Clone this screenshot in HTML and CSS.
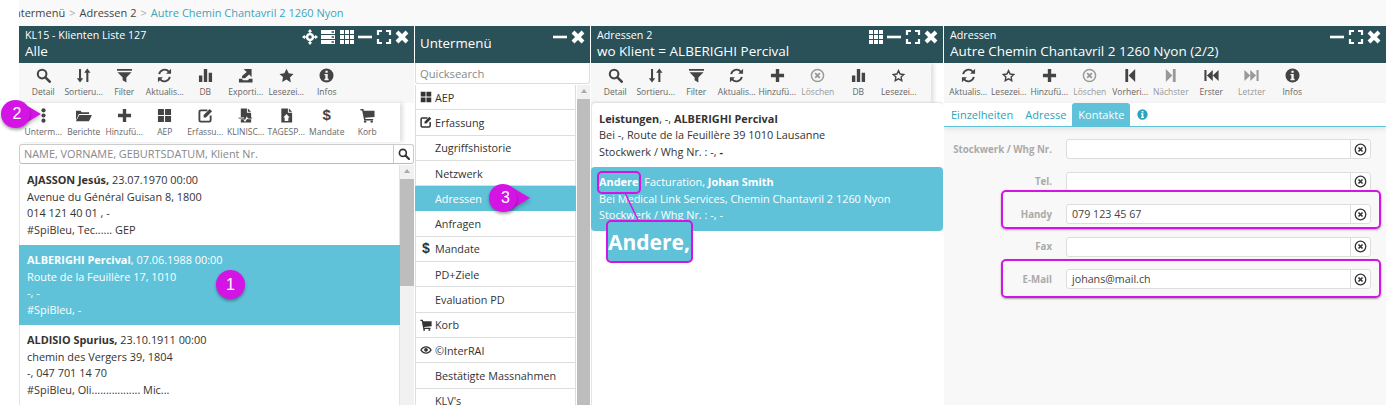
FILE: index.html
```html
<!DOCTYPE html>
<html lang="en">
<head>
    <meta charset="UTF-8">
    <meta name="viewport" content="width=device-width, initial-scale=1.0">
    <title>KL15 - Klienten Liste</title>
    <link rel="stylesheet" href="styles.css">
</head>
<body>
    <!-- Icon sheet -->
    <svg class="icon-sheet" xmlns="http://www.w3.org/2000/svg">
        <symbol id="i-search" viewBox="0 0 16 16"><circle cx="6.500" cy="6.500" r="4.600" fill="none" stroke="currentColor" stroke-width="2.200"/><path d="M10 10l4.600 4.600" stroke="currentColor" stroke-width="2.800" stroke-linecap="round"/></symbol>
        <symbol id="i-sort" viewBox="0 0 16 16"><path d="M3.200 1h2.200v10h2.300l-3.400 4.500L.9 11h2.300zM11 15h2.200V5h2.300L12 .5 8.700 5H11z" fill="currentColor"/></symbol>
        <symbol id="i-filter" viewBox="0 0 16 16"><path d="M0 1h16v2H0zM.5 4.500h15L10 10v5.500L6 13v-3z" fill="currentColor"/></symbol>
        <symbol id="i-refresh" viewBox="0 0 16 16"><path d="M2.300 6.500A6 6 0 0 1 12.600 3.800M13.700 9.500A6 6 0 0 1 3.400 12.200" fill="none" stroke="currentColor" stroke-width="2"/><path d="M15 .9v5.300H9.700zM1 15.100V9.800h5.300z" fill="currentColor"/></symbol>
        <symbol id="i-chart" viewBox="0 0 16 16"><path d="M1 8h3.600v7H1zM6.200 1h3.600v14H6.200zM11.400 5H15v10h-3.600z" fill="currentColor"/></symbol>
        <symbol id="i-export" viewBox="0 0 16 16"><path d="M1 11.500h3l1.500 1.500h5l1.500-1.500h3.500V15.500H1zM6 1h8.500v8.500l-2.700-2.700L7.500 11H4.300V8.500l5-4.300z" fill="currentColor"/></symbol>
        <symbol id="i-star" viewBox="0 0 16 16"><path d="M8 .8l2.300 4.900 5.200.7-3.800 3.700.9 5.300L8 12.300l-4.600 2.600.9-5.300L.5 6.400l5.200-.7z" fill="currentColor"/></symbol>
        <symbol id="i-star-o" viewBox="0 0 16 16"><path d="M8 2.800l1.700 3.600 3.900.5-2.800 2.700.7 3.900L8 11.600l-3.500 1.900.7-3.900-2.800-2.700 3.900-.5z" fill="none" stroke="currentColor" stroke-width="1.500"/></symbol>
        <symbol id="i-info" viewBox="0 0 16 16"><path fill-rule="evenodd" d="M8 .5a7.500 7.500 0 1 0 0 15 7.500 7.500 0 0 0 0-15zM6.800 2.800h2.500v2.300H6.800zM5.800 6.300h3.500v5.200h1V13H5.800v-1.500h1V7.800h-1z" fill="currentColor"/></symbol>
        <symbol id="i-dots" viewBox="0 0 16 16"><circle cx="8" cy="2.500" r="2.200" fill="currentColor"/><circle cx="8" cy="8" r="2.200" fill="currentColor"/><circle cx="8" cy="13.500" r="2.200" fill="currentColor"/></symbol>
        <symbol id="i-folder" viewBox="0 0 18 16"><path d="M1 3h5l1 1.500h8v2H4L1 13zM4.600 7.500H18L14.800 14H.9z" fill="currentColor"/></symbol>
        <symbol id="i-plus" viewBox="0 0 16 16"><path d="M6.200 1h3.600v5.200H15v3.600H9.800V15H6.200V9.800H1V6.200h5.200z" fill="currentColor"/></symbol>
        <symbol id="i-large" viewBox="0 0 16 16"><path d="M1 1h6.400v6.400H1zM8.600 1H15v6.400H8.600zM1 8.600h6.400V15H1zM8.600 8.600H15V15H8.600z" fill="currentColor"/></symbol>
        <symbol id="i-edit" viewBox="0 0 16 16"><path d="M10 2.500H3A1.500 1.500 0 0 0 1.500 4v9A1.500 1.500 0 0 0 3 14.500h9a1.500 1.500 0 0 0 1.500-1.500V8" fill="none" stroke="currentColor" stroke-width="2"/><path d="M6 7.500L12.500 1 15 3.500 8.500 10H6z" fill="currentColor"/></symbol>
        <symbol id="i-pulse" viewBox="0 0 16 16"><path d="M3 .5h6.500v4.500H14v5.800h-3L9.500 8.500 7.500 12.500 6 9.800H3zM10.500.5L14 4h-3.500zM3 12h2.400l2.100 2.800 2.300-3.300.5.500H14v3.500H3z" fill="currentColor"/><path d="M.5 10.800h5l1 1.700 2.500-4.500 2 2.800h4" fill="none" stroke="currentColor" stroke-width=".9"/></symbol>
        <symbol id="i-home" viewBox="0 0 16 16"><path fill-rule="evenodd" d="M2.500.5h7v4.500h4.500v10.500H2.500zM8 6.500L4.500 10H6v3.800h4V10h1.500zM10.500.5L14 4h-3.500z" fill="currentColor"/></symbol>
        <symbol id="i-cart" viewBox="0 0 16 16"><path d="M.5 1h3l.7 2H15.500v6.500L5.500 10.500l.3 1.200H14V13.300H4.400L2.300 2.600H.5z" fill="currentColor"/><circle cx="5.500" cy="14.500" r="1.300" fill="currentColor"/><circle cx="12.500" cy="14.500" r="1.300" fill="currentColor"/></symbol>
        <symbol id="i-eye" viewBox="0 0 16 16"><path fill-rule="evenodd" d="M8 3C4.500 3 1.800 5.200.3 8c1.500 2.800 4.200 5 7.700 5s6.200-2.200 7.700-5C14.200 5.200 11.500 3 8 3zM8 4.800c2.400 0 4.400 1.200 5.600 3.200-1.200 2-3.200 3.200-5.600 3.200S3.600 10 2.400 8C3.600 6 5.600 4.800 8 4.800z" fill="currentColor"/><circle cx="8" cy="7.800" r="2.500" fill="currentColor"/></symbol>
        <symbol id="i-clear" viewBox="0 0 16 16"><circle cx="8" cy="8" r="6.500" fill="none" stroke="currentColor" stroke-width="1.600"/><path d="M5.500 5.500l5 5M10.500 5.500l-5 5" stroke="currentColor" stroke-width="2"/></symbol>
        <symbol id="i-prev" viewBox="0 0 16 16"><path d="M2.500 1h3v14h-3zM6 8l7-7v14z" fill="currentColor"/></symbol>
        <symbol id="i-next" viewBox="0 0 16 16"><path d="M10.500 1h3v14h-3zM10 8L3 1v14z" fill="currentColor"/></symbol>
        <symbol id="i-first" viewBox="0 0 18 16"><path d="M.5 1.500h2.500v13H.5zM3.500 8l7-6.500v13zM10.500 8l7-6.500v13z" fill="currentColor"/></symbol>
        <symbol id="i-last" viewBox="0 0 18 16"><path d="M15 1.500h2.500v13H15zM14.500 8l-7-6.500v13zM7.500 8l-7-6.500v13z" fill="currentColor"/></symbol>
        <symbol id="i-move" viewBox="0 0 16 16"><path d="M8 0l2.300 2.800H8.700v1a4.300 4.300 0 0 1 3.500 3.500h1V5.700L16 8l-2.800 2.300V8.700h-1a4.300 4.300 0 0 1-3.500 3.500v1h1.600L8 16l-2.300-2.800h1.600v-1a4.300 4.300 0 0 1-3.500-3.500h-1v1.600L0 8l2.800-2.300v1.600h1a4.300 4.300 0 0 1 3.500-3.500v-1H5.700z" fill="currentColor"/><circle cx="8" cy="8" r="1.700" fill="#2a5058"/></symbol>
        <symbol id="i-server" viewBox="0 0 16 16"><path fill-rule="evenodd" d="M1 1h14v4H1zM11.500 2.300v1.400H14V2.300zM1 6h14v4H1zM11.500 7.300v1.400H14V7.300zM1 11h14v4H1zM11.500 12.300v1.400H14v-1.400z" fill="currentColor"/></symbol>
        <symbol id="i-grid" viewBox="0 0 16 16"><path d="M1 1h4v4H1zM6 1h4v4H6zM11 1h4v4h-4zM1 6h4v4H1zM6 6h4v4H6zM11 6h4v4h-4zM1 11h4v4H1zM6 11h4v4H6zM11 11h4v4h-4z" fill="currentColor"/></symbol>
        <symbol id="i-min" viewBox="0 0 16 16"><path d="M1 6.700h14v2.600H1z" fill="currentColor"/></symbol>
        <symbol id="i-full" viewBox="0 0 16 16"><path d="M2 6V2h4M10 2h4v4M14 10v4h-4M6 14H2v-4" fill="none" stroke="currentColor" stroke-width="2.200"/></symbol>
        <symbol id="i-close" viewBox="0 0 16 16"><path d="M3 3l10 10M13 3L3 13" stroke="currentColor" stroke-width="4"/></symbol>
    </svg>

    <div class="breadcrumb">
        <div class="breadcrumb-inner">
            <span>Untermenü</span><span class="sep">&gt;</span><span>Adressen 2</span><span class="sep">&gt;</span><span class="current">Autre Chemin Chantavril 2 1260 Nyon</span>
        </div>
    </div>

    <div class="panels">
        <!-- Klienten Liste -->
        <section class="panel panel-clients">
            <header class="panel-head">
                <div class="head-titles">
                    <div class="head-small">KL15 - Klienten Liste 127</div>
                    <div class="head-big">Alle</div>
                </div>
                <div class="head-icons">
                    <svg><use href="#i-move"/></svg><svg><use href="#i-server"/></svg><svg><use href="#i-grid"/></svg><svg><use href="#i-min"/></svg><svg><use href="#i-full"/></svg><svg><use href="#i-close"/></svg>
                </div>
            </header>
            <div class="toolbar">
                <div class="tool"><svg><use href="#i-search"/></svg><span>Detail</span></div>
                <div class="tool"><svg><use href="#i-sort"/></svg><span>Sortieru...</span></div>
                <div class="tool"><svg><use href="#i-filter"/></svg><span>Filter</span></div>
                <div class="tool"><svg><use href="#i-refresh"/></svg><span>Aktualis...</span></div>
                <div class="tool"><svg><use href="#i-chart"/></svg><span>DB</span></div>
                <div class="tool"><svg><use href="#i-export"/></svg><span>Exporti...</span></div>
                <div class="tool"><svg><use href="#i-star"/></svg><span>Lesezei...</span></div>
                <div class="tool"><svg><use href="#i-info"/></svg><span>Infos</span></div>
            </div>
            <div class="toolbar toolbar-white">
                <div class="tool"><svg><use href="#i-dots"/></svg><span>Unterm...</span></div>
                <div class="tool"><svg class="icon-wide"><use href="#i-folder"/></svg><span>Berichte</span></div>
                <div class="tool"><svg><use href="#i-plus"/></svg><span>Hinzufü...</span></div>
                <div class="tool"><svg><use href="#i-large"/></svg><span>AEP</span></div>
                <div class="tool"><svg><use href="#i-edit"/></svg><span>Erfassu...</span></div>
                <div class="tool"><svg><use href="#i-pulse"/></svg><span>KLINISC...</span></div>
                <div class="tool"><svg><use href="#i-home"/></svg><span>TAGESP...</span></div>
                <div class="tool"><b class="dollar">$</b><span>Mandate</span></div>
                <div class="tool"><svg><use href="#i-cart"/></svg><span>Korb</span></div>
            </div>
            <div class="searchbar">
                <div class="searchbar-text">NAME, VORNAME, GEBURTSDATUM, Klient Nr.</div>
                <div class="searchbar-btn"><svg><use href="#i-search"/></svg></div>
            </div>
            <div class="scroll-wrap">
                <div class="client-list">
                    <div class="client">
                        <div><b>AJASSON Jesús,</b> 23.07.1970 00:00</div>
                        <div>Avenue du Général Guisan 8, 1800</div>
                        <div>014 121 40 01 , -</div>
                        <div>#SpiBleu, Tec...... GEP</div>
                    </div>
                    <div class="client selected">
                        <div><b>ALBERIGHI Percival</b>, 07.06.1988 00:00</div>
                        <div>Route de la Feuillère 17, 1010</div>
                        <div>-, -</div>
                        <div>#SpiBleu, -</div>
                    </div>
                    <div class="client">
                        <div><b>ALDISIO Spurius,</b> 23.10.1911 00:00</div>
                        <div>chemin des Vergers 39, 1804</div>
                        <div>-, 047 701 14 70</div>
                        <div>#SpiBleu, Oli................. Mic...</div>
                    </div>
                </div>
                <div class="scrollbar"><i class="scroll-up"></i><i class="scroll-thumb thumb-clients"></i></div>
            </div>
        </section>

        <!-- Untermenü -->
        <section class="panel panel-menu">
            <header class="panel-head">
                <div class="head-titles"><div class="head-menu">Untermenü</div></div>
                <div class="head-icons">
                    <svg><use href="#i-min"/></svg><svg><use href="#i-close"/></svg>
                </div>
            </header>
            <div class="quicksearch">Quicksearch</div>
            <div class="scroll-wrap">
                <ul class="menu-list">
                    <li><svg><use href="#i-large"/></svg>AEP</li>
                    <li><svg><use href="#i-edit"/></svg>Erfassung</li>
                    <li>Zugriffshistorie</li>
                    <li>Netzwerk</li>
                    <li class="selected">Adressen</li>
                    <li>Anfragen</li>
                    <li><b class="dollar">$</b>Mandate</li>
                    <li>PD+Ziele</li>
                    <li>Evaluation PD</li>
                    <li><svg><use href="#i-cart"/></svg>Korb</li>
                    <li><svg><use href="#i-eye"/></svg>©InterRAI</li>
                    <li>Bestätigte Massnahmen</li>
                    <li>KLV's</li>
                </ul>
                <div class="scrollbar scrollbar-gray"><i class="scroll-up"></i></div>
            </div>
        </section>

        <!-- Adressen 2 -->
        <section class="panel panel-addresses">
            <header class="panel-head">
                <div class="head-titles">
                    <div class="head-small">Adressen 2</div>
                    <div class="head-big">wo Klient = ALBERIGHI Percival</div>
                </div>
                <div class="head-icons">
                    <svg><use href="#i-grid"/></svg><svg><use href="#i-min"/></svg><svg><use href="#i-full"/></svg><svg><use href="#i-close"/></svg>
                </div>
            </header>
            <div class="toolbar toolbar-short">
                <div class="tool"><svg><use href="#i-search"/></svg><span>Detail</span></div>
                <div class="tool"><svg><use href="#i-sort"/></svg><span>Sortieru...</span></div>
                <div class="tool"><svg><use href="#i-filter"/></svg><span>Filter</span></div>
                <div class="tool"><svg><use href="#i-refresh"/></svg><span>Aktualis...</span></div>
                <div class="tool"><svg><use href="#i-plus"/></svg><span>Hinzufü...</span></div>
                <div class="tool disabled"><svg><use href="#i-clear"/></svg><span>Löschen</span></div>
                <div class="tool"><svg><use href="#i-chart"/></svg><span>DB</span></div>
                <div class="tool"><svg><use href="#i-star-o"/></svg><span>Lesezei...</span></div>
            </div>
            <div class="address-list">
                <div class="address">
                    <div><b>Leistungen</b>, -, <b>ALBERIGHI Percival</b></div>
                    <div>Bei -, Route de la Feuillère 39 1010 Lausanne</div>
                    <div>Stockwerk / Whg Nr. : -, <b>-</b></div>
                </div>
                <div class="address selected">
                    <div><b>Andere,</b> Facturation, <b>Johan Smith</b></div>
                    <div>Bei Medical Link Services, Chemin Chantavril 2 1260 Nyon</div>
                    <div>Stockwerk / Whg Nr. : -, -</div>
                </div>
            </div>
        </section>

        <!-- Adressen detail -->
        <section class="panel panel-detail">
            <header class="panel-head">
                <div class="head-titles">
                    <div class="head-small">Adressen</div>
                    <div class="head-big">Autre Chemin Chantavril 2 1260 Nyon (2/2)</div>
                </div>
                <div class="head-icons">
                    <svg><use href="#i-min"/></svg><svg><use href="#i-full"/></svg><svg><use href="#i-close"/></svg>
                </div>
            </header>
            <div class="toolbar">
                <div class="tool"><svg><use href="#i-refresh"/></svg><span>Aktualis...</span></div>
                <div class="tool"><svg><use href="#i-star-o"/></svg><span>Lesezei...</span></div>
                <div class="tool"><svg><use href="#i-plus"/></svg><span>Hinzufü...</span></div>
                <div class="tool disabled"><svg><use href="#i-clear"/></svg><span>Löschen</span></div>
                <div class="tool"><svg><use href="#i-prev"/></svg><span>Vorheri...</span></div>
                <div class="tool disabled"><svg><use href="#i-next"/></svg><span>Nächster</span></div>
                <div class="tool"><svg><use href="#i-first"/></svg><span>Erster</span></div>
                <div class="tool disabled"><svg><use href="#i-last"/></svg><span>Letzter</span></div>
                <div class="tool"><svg><use href="#i-info"/></svg><span>Infos</span></div>
            </div>
            <div class="tabs">
                <div class="tab">Einzelheiten</div>
                <div class="tab">Adresse</div>
                <div class="tab active">Kontakte</div>
                <svg class="tab-info"><use href="#i-info"/></svg>
            </div>
            <div class="form">
                <div class="form-row">
                    <label>Stockwerk / Whg Nr.</label>
                    <div class="field"><div class="field-value"></div><div class="field-clear"><svg><use href="#i-clear"/></svg></div></div>
                </div>
                <div class="form-row">
                    <label>Tel.</label>
                    <div class="field"><div class="field-value"></div><div class="field-clear"><svg><use href="#i-clear"/></svg></div></div>
                </div>
                <div class="form-row">
                    <label>Handy</label>
                    <div class="field"><div class="field-value">079 123 45 67</div><div class="field-clear"><svg><use href="#i-clear"/></svg></div></div>
                </div>
                <div class="form-row">
                    <label>Fax</label>
                    <div class="field"><div class="field-value"></div><div class="field-clear"><svg><use href="#i-clear"/></svg></div></div>
                </div>
                <div class="form-row">
                    <label>E-Mail</label>
                    <div class="field"><div class="field-value">johans@mail.ch</div><div class="field-clear"><svg><use href="#i-clear"/></svg></div></div>
                </div>
            </div>
        </section>
    </div>

    <!-- Annotations drawn over the screenshot -->
    <div class="badge badge-one">1</div>
    <div class="badge-tip tip-two"></div>
    <div class="badge badge-two">2</div>
    <div class="badge-tip tip-three"></div>
    <div class="badge badge-three">3</div>
    <div class="mark mark-andere"></div>
    <div class="mark mark-handy"></div>
    <div class="mark mark-email"></div>
    <svg class="mark-line"><path d="M2 0L15 27" stroke="#d414e4" stroke-width="1.500"/></svg>
    <div class="loupe">Andere,</div>
</body>
</html>
```

FILE: styles.css
```css
/* Reset some default styles */
* {
    margin: 0;
    padding: 0;
    box-sizing: border-box;
    font-family: "Open Sans", Arial, sans-serif;
}

body {
    width: 1386px;
    height: 405px;
    overflow: hidden;
    position: relative;
    background-color: #fff;
    color: #333;
    font-size: 11px;
}

.icon-sheet {
    display: none;
}

/* Breadcrumb */
.breadcrumb {
    height: 26px;
    margin-left: 19px;
    overflow: hidden;
    background-color: #f9f9f9;
}

.breadcrumb-inner {
    display: flex;
    margin-left: -13px;
    padding-top: 5px;
    font-size: 11px;
    line-height: 16px;
    white-space: nowrap;
    color: #444;
}

.breadcrumb .sep {
    margin: 0 4px;
    color: #aaa;
}

.breadcrumb .current {
    color: #3ba5bd;
}

/* Panels */
.panels {
    display: flex;
    height: 379px;
    padding-left: 19px;
}

.panel {
    flex: none;
    display: flex;
    flex-direction: column;
    overflow: hidden;
}

.panel-clients {
    width: 395px;
    margin-right: 1px;
}

.panel-menu {
    width: 175px;
    margin-right: 1px;
}

.panel-addresses {
    width: 352px;
    margin-right: 1px;
}

.panel-detail {
    width: 442px;
}

.panel-head {
    flex: none;
    height: 37px;
    display: flex;
    justify-content: space-between;
    padding: 1px 4px 0 6px;
    background-color: #2a5058;
    color: #fff;
}

.head-small {
    font-size: 10.700px;
    line-height: 16px;
}

.head-big {
    font-size: 13.500px;
    line-height: 17px;
}

.head-menu {
    margin-left: -1px;
    font-size: 13.300px;
    line-height: 33px;
}

.head-icons {
    display: flex;
    gap: 2.500px;
    padding-top: 2px;
}

.head-icons svg {
    width: 16px;
    height: 16px;
}

/* Toolbars */
.toolbar {
    flex: none;
    height: 40px;
    display: flex;
    padding: 4px 0 0 4px;
    background-color: #f7f7f7;
}

.toolbar-white {
    height: 39px;
    width: 381px;
    background-color: #fff;
    box-shadow: 3px 0 4px rgba(0, 0, 0, 0.12);
}

.toolbar-short {
    width: 340px;
    box-shadow: 3px 0 4px rgba(0, 0, 0, 0.12);
}

.tool {
    width: 40.500px;
    display: flex;
    flex-direction: column;
    align-items: center;
    color: #444;
}

.tool svg {
    width: 15px;
    height: 15px;
    margin-top: 1px;
    flex: none;
}

.tool svg.icon-wide {
    width: 17px;
}

.tool span {
    margin-top: 1px;
    font-size: 8.500px;
    line-height: 15px;
    white-space: nowrap;
    color: #666;
}

.tool.disabled svg {
    color: #999;
}

.tool.disabled span {
    color: #999;
}

.dollar {
    font-family: "Liberation Sans", Arial, sans-serif;
    font-size: 15px;
    line-height: 16px;
    color: #444;
}

/* Client search */
.searchbar {
    flex: none;
    height: 20px;
    display: flex;
    margin-top: 2px;
    border: 1px solid #ccc;
    border-bottom-color: #bbb;
    border-radius: 3px;
    background-color: #fff;
}

.searchbar-text {
    flex: 1;
    padding-left: 4px;
    font-size: 10.900px;
    line-height: 18px;
    color: #888;
}

.searchbar-btn {
    width: 20px;
    display: flex;
    align-items: center;
    justify-content: center;
    border-left: 1px solid #ccc;
    color: #333;
}

.searchbar-btn svg {
    width: 12px;
    height: 12px;
}

/* Lists with a scrollbar */
.scroll-wrap {
    flex: 1;
    min-height: 0;
    display: flex;
    margin-top: 1px;
}

.scrollbar {
    flex: none;
    width: 14px;
    background-color: #f1f1f1;
}

.scrollbar-gray {
    width: 13px;
    margin-left: 1px;
    background-color: #bdbdbd;
}

.scroll-up {
    display: block;
    height: 14px;
    background-color: #f1f1f1;
    position: relative;
}

.scroll-up::after {
    content: "";
    position: absolute;
    left: 4px;
    top: 4px;
    border-left: 3px solid transparent;
    border-right: 3px solid transparent;
    border-bottom: 4px solid #aaa;
}

.scroll-thumb {
    display: block;
    background-color: #bdbdbd;
}

.thumb-clients {
    height: 107px;
}

.client-list {
    width: 381px;
    background-color: #fff;
    border-left: 1px solid #e4e4e4;
    border-right: 1px solid #e4e4e4;
}

.client {
    height: 80px;
    padding: 7px 7px 0;
    font-size: 10.900px;
    line-height: 16.500px;
    white-space: nowrap;
    color: #333;
}

.client.selected {
    margin: 0 -1px;
    padding-left: 8px;
    background-color: #5fc2d9;
    color: #fff;
}

/* Untermenu */
.quicksearch {
    flex: none;
    height: 21px;
    padding-left: 4px;
    font-size: 11.200px;
    line-height: 21px;
    color: #888;
    background-color: #fff;
    border: 1px solid #ddd;
    border-top: none;
    border-radius: 0 0 3px 3px;
}

.menu-list {
    width: 161px;
    flex: none;
    list-style: none;
    background-color: #fff;
    border-left: 1px solid #ddd;
    border-right: 1px solid #ddd;
}

.menu-list li {
    height: 25.300px;
    display: flex;
    align-items: center;
    padding-left: 19px;
    position: relative;
    font-size: 10.800px;
    color: #333;
    border-bottom: 1px solid #ddd;
    white-space: nowrap;
}

.menu-list li svg,
.menu-list li .dollar {
    position: absolute;
    left: 4px;
    top: 6px;
    width: 12px;
    height: 12px;
    color: #333;
}

.menu-list li .dollar {
    top: 3px;
    left: 6px;
    font-size: 14px;
}

.menu-list li.selected {
    margin: 0 -1px;
    padding-left: 20px;
    background-color: #5fc2d9;
    color: #fff;
    border-bottom: none;
}

/* Address list */
.address-list {
    flex: 1;
    background-color: #fff;
    border-left: 1px solid #e4e4e4;
    border-radius: 4px 4px 0 0;
    box-shadow: 0 -1px 2px rgba(0, 0, 0, 0.12);
}

.address {
    height: 64px;
    padding: 7.500px 7px 0;
    font-size: 10.900px;
    line-height: 16.500px;
    white-space: nowrap;
    color: #333;
}

.address.selected {
    margin-left: -1px;
    padding-left: 8px;
    padding-top: 7px;
    border-radius: 4px;
    background-color: #5fc2d9;
    color: #fff;
}

/* Detail tabs */
.tabs {
    flex: none;
    height: 24px;
    display: flex;
    align-items: flex-end;
    padding-left: 1px;
    border-bottom: 1px solid #5fc2d9;
    background-color: #fff;
    box-shadow: 0 2px 5px rgba(0, 0, 0, 0.1);
    position: relative;
}

.tab {
    height: 23px;
    padding: 0 6px;
    font-size: 11px;
    line-height: 23px;
    color: #2aa3bd;
}

.tab.active {
    background-color: #5fc2d9;
    color: #fff;
    border-radius: 3px 3px 0 0;
}

.tab-info {
    width: 11px;
    height: 11px;
    margin: 0 0 6px 7px;
    color: #2aa3bd;
}

/* Detail form */
.form {
    flex: 1;
    display: flex;
    flex-direction: column;
    gap: 12.500px;
    padding: 12px 15px 0 0;
    background-color: #f8f8f8;
}

.form-row {
    display: flex;
    height: 20px;
    align-items: center;
}

.form-row label {
    width: 108px;
    margin-right: 14px;
    text-align: right;
    font-size: 9.700px;
    font-weight: 700;
    color: #aaa;
    white-space: nowrap;
}

.field {
    flex: 1;
    height: 20px;
    display: flex;
    background-color: #fff;
    border: 1px solid #ddd;
    border-radius: 3px;
}

.field-value {
    flex: 1;
    padding-left: 5px;
    font-size: 10.700px;
    line-height: 18px;
    color: #444;
}

.field-clear {
    width: 20px;
    display: flex;
    align-items: center;
    justify-content: center;
    border-left: 1px solid #ddd;
    color: #333;
}

.field-clear svg {
    width: 13px;
    height: 13px;
}

/* Annotations */
.badge {
    position: absolute;
    width: 29px;
    height: 29px;
    border-radius: 50%;
    background-color: #d414e4;
    color: #fff;
    font-family: "Liberation Sans", Arial, sans-serif;
    font-size: 16px;
    line-height: 29px;
    text-align: center;
    box-shadow: 0 2px 3px rgba(0, 0, 0, 0.35);
}

.badge-one {
    left: 216px;
    top: 270px;
}

.badge-two {
    left: 1px;
    top: 100px;
    height: 28px;
    line-height: 28px;
    text-indent: 3px;
}

.badge-three {
    left: 489px;
    top: 184px;
    width: 28px;
    height: 28px;
    line-height: 28px;
    text-indent: 5px;
}

.badge-tip {
    position: absolute;
    width: 0;
    height: 0;
    border-top: 13px solid transparent;
    border-bottom: 13px solid transparent;
    border-left: 22px solid #d414e4;
    filter: drop-shadow(0 2px 2px rgba(0, 0, 0, 0.3));
}

.tip-two {
    left: 19px;
    top: 101px;
}

.tip-three {
    left: 508px;
    top: 185px;
}

.mark {
    position: absolute;
    border: 2px solid #d414e4;
    border-radius: 5px;
}

.mark-andere {
    left: 597px;
    top: 171px;
    width: 44px;
    height: 23px;
}

.mark-handy {
    left: 1001px;
    top: 190px;
    width: 380px;
    height: 39px;
    box-shadow: 0 1px 2px rgba(0, 0, 0, 0.35);
}

.mark-email {
    left: 1001px;
    top: 259px;
    width: 380px;
    height: 39px;
    box-shadow: 0 1px 2px rgba(0, 0, 0, 0.35);
}

.mark-line {
    position: absolute;
    left: 623px;
    top: 193px;
    width: 18px;
    height: 27px;
}

.loupe {
    position: absolute;
    left: 606px;
    top: 220px;
    width: 87px;
    height: 43px;
    border: 2px solid #d414e4;
    border-radius: 5px;
    background-color: #5fc2d9;
    color: #fff;
    font-size: 21px;
    font-weight: 700;
    line-height: 41px;
    white-space: nowrap;
    overflow: hidden;
}
```
